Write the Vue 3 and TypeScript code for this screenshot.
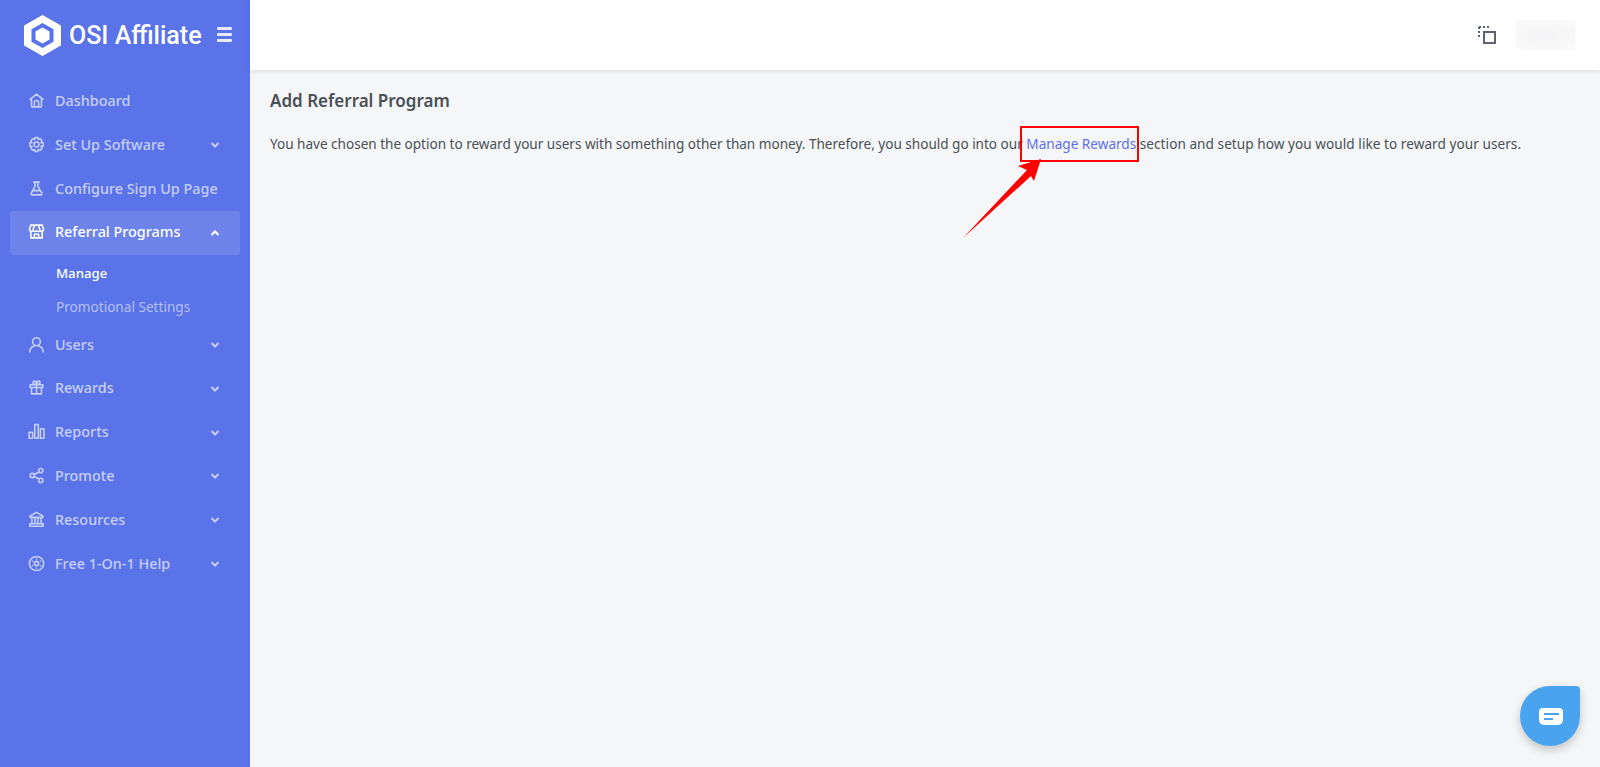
<script setup lang="ts">
interface NavItem {
  label: string
  icon: string
  chevron?: boolean
  active?: boolean
  children?: { label: string; current?: boolean }[]
}
const items: NavItem[] = [
  { label: 'Dashboard', icon: 'M3 10.5 12 3l9 7.5M5 9v11a1 1 0 0 0 1 1h12a1 1 0 0 0 1-1V9M9 21v-6a3 3 0 0 1 6 0v6' },
  { label: 'Set Up Software', chevron: true, icon: 'M10 2h4l.7 3 2.700-1 2.600 3-1.800 2.400L21.500 10v4l-3.300.6 1.800 2.400-2.600 3-2.700-1-.7 3h-4l-.7-3-2.700 1L4 17l1.800-2.400L2.500 14v-4l3.300-.6L4 7l2.600-3 2.700 1zM12 8.500a3.500 3.500 0 1 0 0 7 3.500 3.500 0 0 0 0-7z' },
  { label: 'Configure Sign Up Page', icon: 'M8 3h8M10 3v6L4.500 18.500A1.700 1.700 0 0 0 6 21h12a1.700 1.700 0 0 0 1.500-2.500L14 9V3M7.500 15h9' },
  {
    label: 'Referral Programs', chevron: true, active: true,
    icon: 'M4 3h16l2 6a3 3 0 0 1-5 2 3.500 3.500 0 0 1-5 0 3.500 3.500 0 0 1-5 0 3 3 0 0 1-5-2zM4 12v9h16v-9M9 21v-5h6v5M9.500 3 7 10M14.500 3 17 10',
    children: [{ label: 'Manage', current: true }, { label: 'Promotional Settings' }]
  },
  { label: 'Users', chevron: true, icon: 'M12 2.500a5.500 5.500 0 1 0 0 11 5.500 5.500 0 0 0 0-11zM2.500 22.500c0-5 4-9 9.500-9s9.500 4 9.500 9' },
  { label: 'Rewards', chevron: true, icon: 'M3 8h18v4H3zM5 12v9h14v-9M12 8v13M12 8C9 8 7 7 7 5a2 2 0 0 1 2-2c2 0 3 2 3 5 0-3 1-5 3-5a2 2 0 0 1 2 2c0 2-2 3-5 3z' },
  { label: 'Reports', chevron: true, icon: 'M1.500 13h5v8.500h-5zM9.500 2h5v19.500h-5zM17.500 8h5v13.500h-5z' },
  { label: 'Promote', chevron: true, icon: 'M18 2a3 3 0 1 0 0 6 3 3 0 0 0 0-6zM6 9a3 3 0 1 0 0 6 3 3 0 0 0 0-6zM18 16a3 3 0 1 0 0 6 3 3 0 0 0 0-6zM8.700 10.600l6.600-3.400M8.700 13.400l6.600 3.400' },
  { label: 'Resources', chevron: true, icon: 'M12 2 3 7v2h18V7zM5.500 9v9M10 9v9M14 9v9M18.500 9v9M2.500 18h19v3.500h-19z' },
  { label: 'Free 1-On-1 Help', chevron: true, icon: 'M12 2a10 10 0 1 0 0 20 10 10 0 0 0 0-20zM12 9a3 3 0 1 0 0 6 3 3 0 0 0 0-6zM12 5.500v.1M12 18.400v.1M6.400 8.700v.1M17.600 8.700v.1M6.400 15.200v.1M17.600 15.200v.1' }
]
</script>

<template>
  <div class="page">
    <aside class="sidebar">
      <div class="brand">
        <svg class="logo" viewBox="0 0 37 41" aria-hidden="true">
          <path fill="#fff" stroke="#fff" stroke-width="2" stroke-linejoin="round" fill-rule="evenodd" d="M18.500 1 36 11v19L18.500 40 1 30V11z" />
          <path fill="#5a73e8" d="M18.500 8 29.500 14.200v12.600L18.500 33 7.500 26.800V14.200z" />
          <path fill="#fff" d="M18.500 12.500 25.500 16.500v8l-7 4-7-4v-8z" />
        </svg>
        <span class="brand-name">OSI Affiliate</span>
        <span class="burger"><i></i><i></i><i></i></span>
      </div>
      <nav class="nav">
        <template v-for="item in items" :key="item.label">
          <div class="item" :class="{ active: item.active }">
            <svg class="icon" viewBox="0 0 24 24" aria-hidden="true"><path :d="item.icon" /></svg>
            <span class="label">{{ item.label }}</span>
            <svg v-if="item.chevron" class="chev" viewBox="0 0 10 6" aria-hidden="true">
              <path :d="item.active ? 'M1.500 5 5 1.500 8.500 5' : 'M1.500 1 5 4.500 8.500 1'" />
            </svg>
          </div>
          <div v-if="item.children" class="sub">
            <div v-for="c in item.children" :key="c.label" class="sub-item" :class="{ current: c.current }">{{ c.label }}</div>
          </div>
        </template>
      </nav>
    </aside>

    <div class="main">
      <header class="topbar">
        <svg class="select-icon" viewBox="0 0 18 18" aria-hidden="true">
          <path class="dash" d="M1 1h11M1 1v10" />
          <rect x="6" y="6" width="11" height="11" />
        </svg>
        <div class="blurred"></div>
      </header>
      <section class="content">
        <h1 class="title">Add Referral Program</h1>
        <p class="text"><span class="lead">You have chosen the option to reward your users with something other than money. Therefore, you should go into our</span> <a class="link">Manage Rewards</a> <span class="tail">section and setup how you would like to reward your users.</span></p>
      </section>
    </div>

    <div class="mark"></div>
    <svg class="arrow" viewBox="0 0 1600 767" aria-hidden="true">
      <polygon points="963,238 1027,170 1018,166 1041,159 1034,181 1031,176" />
    </svg>

    <div class="chat">
      <svg viewBox="0 0 24 18" width="24" height="18" aria-hidden="true">
        <path fill="#fff" d="M4 0h16a4 4 0 0 1 4 4v8a5 5 0 0 1-5 5H5a5 5 0 0 1-5-5V4a4 4 0 0 1 4-4z" />
        <path fill="#4aa3ee" d="M5 5h15v2H5zM5 10h9v2H5z" />
      </svg>
    </div>
  </div>
</template>

<style>
html, body { margin: 0; }
</style>

<style scoped>
.page {
  display: flex;
  height: 767px;
  overflow: hidden;
  position: relative;
  font-family: "Noto Sans", "Liberation Sans", sans-serif;
  background: #f5f6f8;
}
.sidebar {
  width: 250px;
  flex: none;
  background: #5a73e8;
  display: flex;
  flex-direction: column;
}
.brand {
  height: 70px;
  padding-left: 24px;
  display: flex;
  align-items: center;
  box-sizing: border-box;
}
.logo { width: 37px; height: 41px; flex: none; }
.brand-name {
  margin: 1px 0 0 8px;
  color: #fff;
  font: 500 25px/1 Roboto, sans-serif;
  white-space: nowrap;
  width: 148px;
}
.burger {
  display: flex;
  flex-direction: column;
  gap: 3px;
  width: 15px;
  margin-top: -2px;
}
.burger i { display: block; height: 3px; background: #e6eafb; border-radius: 1px; }
.nav { padding: 9.600px 10px 0; display: flex; flex-direction: column; }
.item {
  height: 43.800px;
  display: flex;
  align-items: center;
  padding: 0 20px 2px 18px;
  border-radius: 3px;
  color: #c6d0f7;
  font-size: 14.400px;
  font-weight: 500;
  box-sizing: border-box;
}
.item.active { background: #6d83ea; color: #fff; }
.icon {
  width: 17px;
  height: 17px;
  flex: none;
  fill: none;
  stroke: currentColor;
  stroke-width: 2.200;
  stroke-linejoin: round;
  stroke-linecap: round;
}
.label { margin-left: 10px; flex: 1; white-space: nowrap; }
.chev {
  width: 10px;
  height: 6px;
  flex: none;
  margin-top: 2px;
  fill: none;
  stroke: currentColor;
  stroke-width: 2;
}
.sub { display: flex; flex-direction: column; padding-top: 2.400px; }
.sub-item {
  height: 33px;
  line-height: 33px;
  padding-left: 46px;
  font-size: 13.600px;
  color: #b4c0f3;
}
.sub-item.current { color: #fff; font-weight: 500; font-size: 13.200px; }
.main { flex: 1; display: flex; flex-direction: column; min-width: 0; }
.topbar {
  height: 70px;
  background: #fff;
  box-shadow: 0 1px 4px rgba(0, 0, 0, 0.12);
  display: flex;
  align-items: center;
  justify-content: flex-end;
  padding-right: 24px;
  box-sizing: border-box;
  flex: none;
}
.select-icon { width: 18px; height: 18px; margin-right: 20px; fill: none; stroke: #5d6170; }
.select-icon .dash { stroke-width: 2; stroke-dasharray: 2 2; }
.select-icon rect { stroke-width: 2; fill: #fff; }
.blurred {
  width: 60px;
  height: 30px;
  background: radial-gradient(ellipse at center, #f3f3f5, #fbfbfb);
  filter: blur(1px);
}
.content { padding: 20px; }
.title {
  margin: 0;
  font-size: 17px;
  line-height: 22px;
  font-weight: 600;
  color: #495057;
}
.text {
  margin: 21px 0 0;
  font-size: 13.600px;
  line-height: 22px;
  color: #495057;
  white-space: nowrap;
}
.lead { letter-spacing: -0.025px; }
.tail { letter-spacing: 0.050px; }
.link { color: #5d70ec; }
.mark {
  position: absolute;
  left: 1020px;
  top: 126px;
  width: 115px;
  height: 32px;
  border: 2px solid #f00;
}
.arrow {
  position: absolute;
  inset: 0;
  width: 1600px;
  height: 767px;
  pointer-events: none;
}
.arrow polygon { fill: #f00; }
.chat {
  position: absolute;
  left: 1520px;
  top: 686px;
  width: 60px;
  height: 60px;
  background: #4aa3ee;
  border-radius: 50% 4px 50% 50%;
  box-shadow: 0 4px 10px rgba(0, 0, 0, 0.2);
  display: flex;
  align-items: center;
  justify-content: center;
}
.chat svg { margin: 2px 0 0 2px; }
</style>
